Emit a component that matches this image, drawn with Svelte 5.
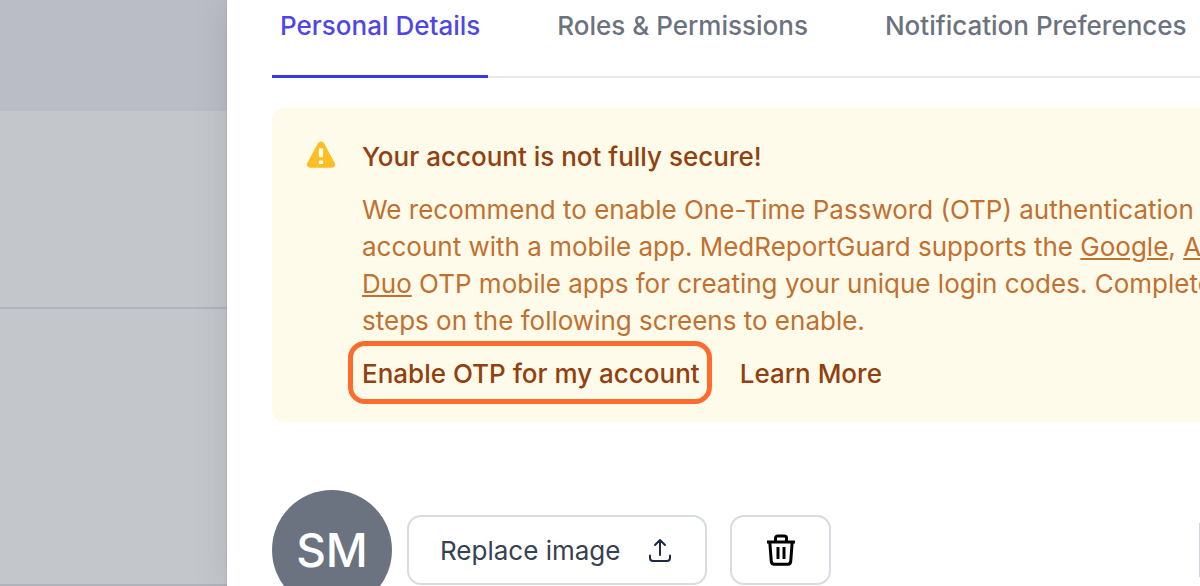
<script lang="ts">
    const tabs = ['Personal Details', 'Roles & Permissions', 'Notification Preferences'];
    let active = $state('Personal Details');
</script>

<div class="page">
    <div class="backdrop">
        <div class="backdrop-header"></div>
        <div class="backdrop-row first"></div>
        <div class="backdrop-row"></div>
    </div>

    <main class="panel">
        <nav class="tabs">
            {#each tabs as tab}
                <button
                    type="button"
                    class="tab"
                    class:active={tab === active}
                    onclick={() => (active = tab)}
                >{tab}</button>
            {/each}
        </nav>

        <section class="alert">
            <svg class="alert-icon" viewBox="0 0 20 20" aria-hidden="true">
                <path
                    fill="#fbbf24"
                    fill-rule="evenodd"
                    d="M8.3 2.9c.75-1.35 2.65-1.35 3.4 0l5.9 11c.7 1.35-.2 2.6-1.6 2.6H4c-1.4 0-2.3-1.25-1.6-2.6zM8.800 6.200v4a.5.5 0 0 0 .5.5h1.400a.5.5 0 0 0 .5-.5v-4a.5.5 0 0 0-.5-.5H9.300a.5.5 0 0 0-.5.5zM8.800 13v1a.5.5 0 0 0 .5.5h1.400a.5.5 0 0 0 .5-.5v-1a.5.5 0 0 0-.5-.5H9.300a.5.5 0 0 0-.5.5z"
                />
            </svg>
            <div class="alert-body">
                <h3>Your account is not fully secure!</h3>
                <p>
                    We recommend to enable One-Time Password (OTP) authentication<br />
                    account with a mobile app. MedReportGuard supports the <a href="#google">Google</a>, <a href="#authy">Authy</a><br />
                    <a href="#duo">Duo</a> OTP mobile apps for creating your unique login codes. Complete<br />
                    steps on the following screens to enable.
                </p>
                <div class="actions">
                    <button type="button" class="action highlighted">Enable OTP for my account</button>
                    <button type="button" class="action">Learn More</button>
                </div>
            </div>
        </section>

        <section class="profile">
            <div class="avatar">SM</div>
            <button type="button" class="btn replace">
                Replace image
                <svg width="24" height="26" viewBox="0 0 24 26" fill="none" stroke="#1f2a44" stroke-width="2" stroke-linecap="round" stroke-linejoin="round" aria-hidden="true">
                    <path d="M12 18V3M7 8l5-5 5 5M2 18.500v2.500a3 3 0 0 0 3 3h14a3 3 0 0 0 3-3v-2.500" />
                </svg>
            </button>
            <button type="button" class="btn trash" aria-label="Delete image">
                <svg width="30" height="34" viewBox="0 0 30 34" fill="none" stroke="#000" stroke-width="3" aria-hidden="true">
                    <path d="M1 9h28M9.500 8V5.200A2.200 2.200 0 0 1 11.700 3h6.600a2.200 2.200 0 0 1 2.200 2.200V8" />
                    <path d="M3.800 9l1.500 19.500a3 3 0 0 0 3 2.700h13.400a3 3 0 0 0 3-2.700L26.200 9M12 14v12M18 14v12" />
                </svg>
            </button>
            <div class="field-edge"></div>
        </section>
    </main>
</div>

<style>
:global(body) {
    margin: 0;
    overflow: hidden;
}
.page {
    display: flex;
    height: 100vh;
    overflow: hidden;
    font-family: Inter, "Liberation Sans", sans-serif;
    font-size: 26px;
    line-height: 37px;
    background: #c3c6cb;
}
.backdrop {
    flex: 0 0 227px;
    display: flex;
    flex-direction: column;
}
.backdrop-header {
    height: 111px;
    background: #babdc6;
}
.backdrop-row {
    flex: 1;
    box-sizing: border-box;
    border-bottom: 2px solid #b0b3bc;
}
.backdrop-row.first {
    flex: 0 0 198px;
}
.panel {
    flex: 1;
    min-width: 0;
    box-sizing: border-box;
    padding-left: 45px;
    background: #fff;
    box-shadow: 0 0 36px rgba(0, 0, 0, 0.1), 0 0 2px rgba(0, 0, 0, 0.15);
    overflow: hidden;
}
button {
    font: inherit;
    cursor: pointer;
}
.tabs {
    display: flex;
    gap: 61px;
    height: 78px;
    box-shadow: inset 0 -2px #e7e8ee;
}
.tab {
    flex: none;
    box-sizing: border-box;
    padding: 6px 8px 30px;
    border: 0;
    border-bottom: 3px solid transparent;
    background: none;
    color: #6b7280;
    font-weight: 500;
    white-space: nowrap;
}
.tab.active {
    color: #4f46e5;
    border-color: #3a36ee;
}
.alert {
    display: flex;
    gap: 23px;
    margin-top: 30px;
    padding: 30px 0 30px 31px;
    border-radius: 12px 0 0 12px;
    background: #fffbeb;
    color: #92400e;
}
.alert-icon {
    flex: none;
    width: 36px;
    height: 36px;
}
.alert-body {
    min-width: 0;
}
h3 {
    margin: 0;
    font-size: 26px;
    font-weight: 500;
}
p {
    margin: 16px 0;
    white-space: nowrap;
    color: #c2702f;
}
p a {
    color: inherit;
}
.actions {
    display: flex;
    gap: 40px;
}
.action {
    position: relative;
    padding: 0;
    border: 0;
    background: none;
    color: inherit;
    font-weight: 500;
}
.highlighted::after {
    content: "";
    position: absolute;
    inset: -14px -12px -12px -14px;
    border: 5px solid #ff6b2c;
    border-radius: 17px;
}
.profile {
    display: flex;
    align-items: center;
    margin-top: 68px;
}
.avatar {
    flex: none;
    width: 120px;
    height: 120px;
    border-radius: 50%;
    background: #6b7280;
    color: #fff;
    font-size: 46px;
    font-weight: 500;
    line-height: 120px;
    text-align: center;
}
.btn {
    display: flex;
    align-items: center;
    justify-content: center;
    box-sizing: border-box;
    height: 70px;
    border: 2px solid #d8dbe0;
    border-radius: 14px;
    background: #fff;
    color: #374151;
}
.replace {
    gap: 28px;
    margin-left: 15px;
    padding: 0 33px 0 31px;
}
.trash {
    width: 101px;
    margin-left: 23px;
}
.field-edge {
    width: 1px;
    height: 54px;
    margin-left: auto;
    background: #d4d3e8;
}
</style>
